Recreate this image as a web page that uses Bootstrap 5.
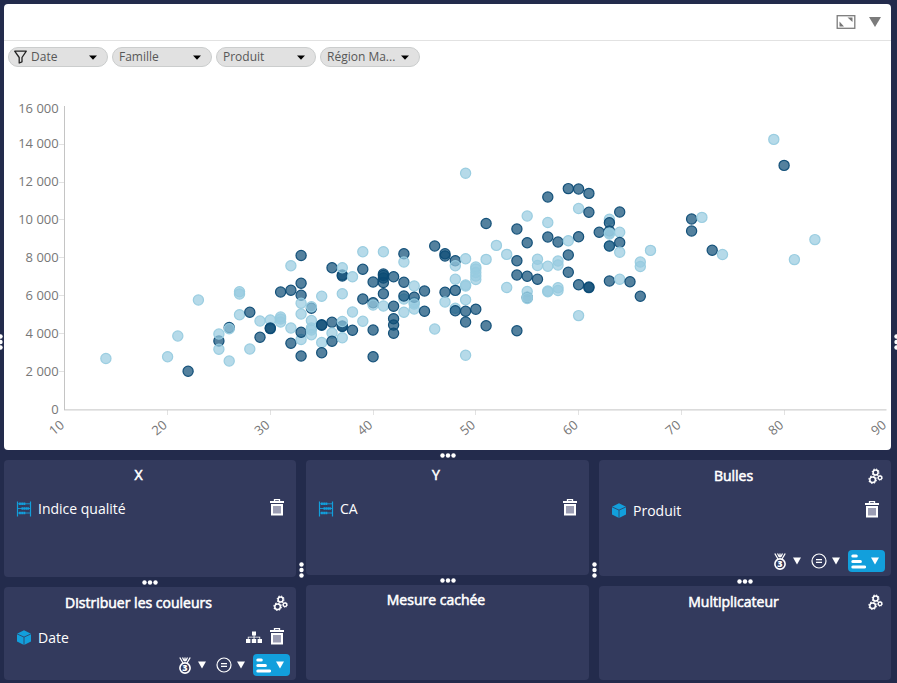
<!DOCTYPE html>
<html lang="fr">
<head>
<meta charset="utf-8">
<meta name="viewport" content="width=device-width, initial-scale=1">
<title>Nuage de points</title>
<link href="https://cdn.jsdelivr.net/npm/bootstrap@5.3.0/dist/css/bootstrap.min.css" rel="stylesheet">
<style>
body{background:#232b4c;font-family:"Open Sans","Noto Sans",sans-serif;font-size:14px;line-height:20px;color:#fff}
svg{display:block;flex:none}
.page{height:683px;padding:4px 6px 3px 4px}
.chart-panel{height:446px;border-radius:4px}
.chart-head{height:37px;border-bottom:1px solid #e2e2e2;padding-right:10px;gap:13px}
.filters{height:27px;padding:6px 4px 0;gap:4px}
.chip{width:100px;height:20px;border:1px solid #cbcdcd;border-radius:10px;background:#e1e1e1;color:#575757;font-size:12px;line-height:18px;padding:0 10px 0 6px}
.chip-icon{padding-left:5px}
.handle-x{height:10px}
.zones{height:220px}
.gutter{width:10px}
.zone-col{width:292px}
.zone-mid{width:283px}
.zone{background:#333a5d;border-radius:4px}
.h117{height:117px}.h116{height:116px}.h115{height:115px}
.zone-head{height:30px;padding:0 8.5px 0 .5px}
.zone-head.with-cog{height:32px}
.zone-title{-webkit-text-stroke:.55px #fff}
.cog{width:15px}
.item{height:38px;padding:0 12px;gap:6px;margin-bottom:-4px}
.with-cog + .item{height:37px}
.item-trash{margin-bottom:3px}
.item-tree{margin-right:2px}
.tools{padding:0 6px 4px 0}
.tool-medal{margin-right:7px}
.tool-equal{margin:0 5px 0 10px}
.tool-caret{margin-right:8px}
.sort-btn{width:37px;height:22px;border-radius:4px;background:#129fdc;padding:0 6px 0 3px}
.edge{top:334px}
.edge-l{left:-3px}.edge-r{right:-2px}
.axis-text{font-size:13px;fill:#777}
</style>
<script src="https://cdn.jsdelivr.net/npm/bootstrap@5.3.0/dist/js/bootstrap.bundle.min.js"></script>
</head>
<body class="overflow-hidden position-relative">
<svg width="0" height="0" class="position-absolute">
<defs>
<symbol id="dots-h" viewBox="0 0 16 6"><g fill="#fff"><circle cx="2.5" cy="3.5" r="2.2"/><circle cx="8" cy="3.5" r="2.2"/><circle cx="13.5" cy="3.5" r="2.2"/></g></symbol>
<symbol id="dots-v" viewBox="0 0 6 16"><g fill="#fff"><circle cx="3.5" cy="2.5" r="2.2"/><circle cx="3.5" cy="8" r="2.2"/><circle cx="3.5" cy="13.5" r="2.2"/></g></symbol>
<symbol id="trash" viewBox="0 0 14 17"><path d="M4.5 2V.7h5V2" fill="none" stroke="#fff" stroke-width="1.3"/><path d="M0 2h14v2H0z" fill="#fff"/><path d="M1 5h12v11.500H1z" fill="#fff"/><path d="M3 7h8v7.500H3z" fill="#9b9db3"/></symbol>
<symbol id="abacus" viewBox="0 0 16 16"><g stroke="#129fdc" fill="none"><path d="M1.5 .5v15M14.5 .5v15" stroke-width="1.2"/><path d="M1 2.8h14M1 7.500h14M1 12h14" stroke-width=".9"/><path d="M3 2.800h6.500M5.500 7.500h7.500M3 12h6.500" stroke-width="2.6" stroke-dasharray="1.9 .3"/></g></symbol>
<symbol id="cube" viewBox="0 0 16 16"><path d="M8 .2l7 3.500v7.800L8 15l-7-3.500V3.700z" fill="#129fdc"/><path d="M1 3.900l7 3.200 7-3.200M8 7.100V15" fill="none" stroke="#333a5d" stroke-width=".8"/></symbol>
<symbol id="cogs" viewBox="0 0 15 16"><g fill="none" stroke="#fff"><circle cx="7.6" cy="4.4" r="2.5" stroke-width="1.5"/><circle cx="7.6" cy="4.4" r="3.4" stroke-width="1.1" stroke-dasharray="1.3 1.37"/><circle cx="4.6" cy="11.7" r="2.8" stroke-width="1.5"/><circle cx="4.6" cy="11.7" r="3.700" stroke-width="1.2" stroke-dasharray="1.5 1.4"/><circle cx="12" cy="9.8" r="1.8" stroke-width="1.3"/><circle cx="12" cy="9.8" r="2.5" stroke-width=".8" stroke-dasharray="1 .96"/></g></symbol>
<symbol id="tree" viewBox="0 0 16 13"><g fill="#fff"><path d="M6 .5h4v4H6zM0 8h4.4v4H0zM5.8 8h4.4v4H5.8zM11.6 8H16v4h-4.4z"/><path d="M7.6 4h.9v4h-.9zM1.8 5.7h12.4v.9H1.8zM1.8 5.7h.8V8h-.8zM13.4 5.7h.8V8h-.8z"/></g></symbol>
<symbol id="medal" viewBox="0 0 12 17"><circle cx="6" cy="11" r="5.1" fill="none" stroke="#fff" stroke-width="1.6"/><path d="M.8.5L4 6M11.2.5L8 6M3.5.5L5.3 4M8.5.5L6.7 4M6 .5v4" stroke="#fff" stroke-width="1.3" fill="none"/><text x="6" y="14.2" font-size="9" font-weight="800" text-anchor="middle" fill="#fff">3</text></symbol>
<symbol id="equal" viewBox="0 0 16 16"><circle cx="8" cy="8" r="7" fill="none" stroke="#fff" stroke-width="1.2"/><path d="M5 6.6h6M5 9.400h6" stroke="#fff" stroke-width="1.1"/></symbol>
<symbol id="caret" viewBox="0 0 8 8"><path d="M0 .5h8L4 7.5z" fill="#fff"/></symbol>
<symbol id="bars" viewBox="0 0 15 15"><path d="M1.8 2h3.500M1.8 7.5h7.600M1.800 13h11.800" stroke="#fff" stroke-width="3" stroke-linecap="round"/></symbol>
<symbol id="chipcaret" viewBox="0 0 8 5"><path d="M0 .5h8L4 4.700z" fill="#000"/></symbol>
</defs>
</svg>
<main class="page d-flex flex-column">
  <section class="chart-panel bg-white">
    <div class="chart-head d-flex align-items-center justify-content-end">
      <svg width="20" height="16" viewBox="0 0 20 16"><rect x="1.2" y="1.7" width="17.6" height="12.6" fill="none" stroke="#7c7c7c" stroke-width="1.3"/><path d="M3.500 7.500v5H8zM11.500 3.500h5V8z" fill="#777"/></svg>
      <svg width="12" height="12" viewBox="0 0 12 12"><path d="M0 1h12L6 11z" fill="#7b7b7b"/></svg>
    </div>
    <div class="filters d-flex">
      <div class="chip chip-icon d-flex align-items-center"><svg width="13" height="14" viewBox="0 0 13 14"><path d="M.7 1.200h11.600L8 7.500v4.300L5.200 13V7.500z" fill="none" stroke="#222" stroke-width="1.3" stroke-linejoin="round"/></svg><span class="flex-grow-1 ps-1">Date</span><svg width="8" height="5"><use href="#chipcaret"/></svg></div>
      <div class="chip d-flex align-items-center"><span class="flex-grow-1">Famille</span><svg width="8" height="5"><use href="#chipcaret"/></svg></div>
      <div class="chip d-flex align-items-center"><span class="flex-grow-1">Produit</span><svg width="8" height="5"><use href="#chipcaret"/></svg></div>
      <div class="chip d-flex align-items-center"><span class="flex-grow-1 text-nowrap">Région Ma...</span><svg width="8" height="5"><use href="#chipcaret"/></svg></div>
    </div>
    <svg id="plot" width="887" height="382" viewBox="4 68 887 382"></svg>
  </section>

  <div class="handle-x d-flex align-items-center justify-content-center"><svg width="16" height="6"><use href="#dots-h"/></svg></div>

  <section class="zones d-flex">
    <div class="zone-col d-flex flex-column">
      <div class="zone h117 flex-shrink-0">
        <div class="zone-head d-flex align-items-center"><div class="zone-title flex-grow-1 text-center">X</div><div class="cog"></div></div>
        <div class="item d-flex align-items-center"><svg width="16" height="16"><use href="#abacus"/></svg><span class="flex-grow-1">Indice qualité</span><svg class="item-trash" width="14" height="17"><use href="#trash"/></svg></div>
      </div>
      <div class="handle-x flex-shrink-0 d-flex align-items-center justify-content-center"><svg width="16" height="6"><use href="#dots-h"/></svg></div>
      <div class="zone flex-grow-1 d-flex flex-column">
        <div class="zone-head with-cog flex-shrink-0 d-flex align-items-center"><div class="zone-title flex-grow-1 text-center">Distribuer les couleurs</div><svg width="15" height="16"><use href="#cogs"/></svg></div>
        <div class="item flex-shrink-0 d-flex align-items-center"><svg width="16" height="16"><use href="#cube"/></svg><span class="flex-grow-1">Date</span><svg class="item-tree" width="16" height="13"><use href="#tree"/></svg><svg class="item-trash" width="14" height="17"><use href="#trash"/></svg></div>
        <div class="tools d-flex justify-content-end align-items-center mt-auto">
          <svg class="tool-medal" width="12" height="17"><use href="#medal"/></svg><svg width="8" height="8"><use href="#caret"/></svg>
          <svg class="tool-equal" width="16" height="16"><use href="#equal"/></svg><svg class="tool-caret" width="8" height="8"><use href="#caret"/></svg>
          <div class="sort-btn d-flex align-items-center justify-content-between"><svg width="15" height="15"><use href="#bars"/></svg><svg width="8" height="8"><use href="#caret"/></svg></div>
        </div>
      </div>
    </div>
    <div class="gutter d-flex align-items-center justify-content-center"><svg width="6" height="16"><use href="#dots-v"/></svg></div>
    <div class="zone-mid d-flex flex-column">
      <div class="zone h115">
        <div class="zone-head d-flex align-items-center"><div class="zone-title flex-grow-1 text-center">Y</div><div class="cog"></div></div>
        <div class="item d-flex align-items-center"><svg width="16" height="16"><use href="#abacus"/></svg><span class="flex-grow-1">CA</span><svg class="item-trash" width="14" height="17"><use href="#trash"/></svg></div>
      </div>
      <div class="handle-x d-flex align-items-center justify-content-center"><svg width="16" height="6"><use href="#dots-h"/></svg></div>
      <div class="zone flex-grow-1">
        <div class="zone-head d-flex align-items-center"><div class="zone-title flex-grow-1 text-center">Mesure cachée</div><div class="cog"></div></div>
      </div>
    </div>
    <div class="gutter d-flex align-items-center justify-content-center"><svg width="6" height="16"><use href="#dots-v"/></svg></div>
    <div class="zone-col d-flex flex-column">
      <div class="zone h116 d-flex flex-column">
        <div class="zone-head with-cog d-flex align-items-center"><div class="zone-title flex-grow-1 text-center">Bulles</div><svg width="15" height="16"><use href="#cogs"/></svg></div>
        <div class="item d-flex align-items-center"><svg width="16" height="16"><use href="#cube"/></svg><span class="flex-grow-1">Produit</span><svg class="item-trash" width="14" height="17"><use href="#trash"/></svg></div>
        <div class="tools d-flex justify-content-end align-items-center mt-auto">
          <svg class="tool-medal" width="12" height="17"><use href="#medal"/></svg><svg width="8" height="8"><use href="#caret"/></svg>
          <svg class="tool-equal" width="16" height="16"><use href="#equal"/></svg><svg class="tool-caret" width="8" height="8"><use href="#caret"/></svg>
          <div class="sort-btn d-flex align-items-center justify-content-between"><svg width="15" height="15"><use href="#bars"/></svg><svg width="8" height="8"><use href="#caret"/></svg></div>
        </div>
      </div>
      <div class="handle-x d-flex align-items-center justify-content-center"><svg width="16" height="6"><use href="#dots-h"/></svg></div>
      <div class="zone flex-grow-1">
        <div class="zone-head with-cog d-flex align-items-center"><div class="zone-title flex-grow-1 text-center">Multiplicateur</div><svg width="15" height="16"><use href="#cogs"/></svg></div>
      </div>
    </div>
  </section>
</main>
<svg class="edge edge-l position-absolute" width="6" height="16"><use href="#dots-v"/></svg>
<svg class="edge edge-r position-absolute" width="6" height="16"><use href="#dots-v"/></svg>
<script>
// Each entry: x value followed by vertical positions, L = light series, D = dark series
const data = `14 L358.5
20 L356.7
21 L336
22 D371.3
23 L300
25 D341 L334 L349.3
26 D327.5 L328.8 L361
27 L291.7 L294 L314.7
28 D312.3 L349
29 L321 D337.3
30 L320 D328 D328.6
31 D292 L317 L319 L322
32 L265.7 D290.3 L328 D343.3
33 D255.5 D283.3 D295.3 L303.3 L314 L339.5 D332.3 D356
34 D308.2 L306.8 L320.5 L328 L330 L334.7
35 L296.3 D324.8 D325.2 L342.5 D352.7
36 D267.7 D322.3 L333 D341.3
37 D276 D275 L267.7 L293.7 D326.5 D326 L321.5 L337.7
38 L276.7 L312 D330.3
39 L251.7 D269.3 D299 L321.3
40 D282 D302.7 L305 D330 D356.7
41 L251.7 D282.5 D278 D275.5 D274 D293.7 L306
42 D276.7 D306.3 D318.7 D325 D333.3
43 D253.7 L262 D282.3 L299 D296 L312.3
44 L286 L302.5 D297.3 L304 L309
45 D291 D311.3
46 D246 L329
47 D253.7 D256 D292.3 L302
48 D260.7 L265.7 L279.3 D290.4 L308.3 D310.7
49 L173.2 L258.7 L285 L286 L299.7 D311.3 D322 L355.2
50 L267 L269 L272.5 L276 L279.5 D309.2
51 D223.5 L259.4 D325.7
52 L245.4
53 L254.4 L287.5
54 D229 D260.7 D275 D330.8
55 L216 D242.7 D276.3 L291.5 D297.5 L297 L298.5
56 L259.3 L265.5 D279.3
57 D197 L222.5 D237 L266.3 L291 L291.7
58 D242 L261 L265 L287.7 L290.5
59 D188.6 L240.7 D255 D272.2
60 D189 L208.5 D236.7 D284.7 L315.6
61 D193.4 D212.3 D287 D287.6
62 D232.3
63 L219.3 D222.7 D231 L233 L234 L246 D246 D281
64 D212 L232.3 D242.5 L252.2 L279.3
65 D281.7
66 L262 L266.5 D296.3
67 L250.4
71 D219 D231
72 L217.4
73 D250.3
74 L254.5
79 L139.4
80 D165.4
81 L259.6
83 L239.6`;
const X = v => 64.8 + (v - 10) * 10.276;
let out = '';
for (let v = 0; v <= 16000; v += 2000) {
  const y = 409.9 - v * .01899;
  const label = v ? (v / 1000) + ' 000' : '0';
  if (v && v < 16000) out += `<path d="M59 ${Math.floor(y)}.5h5" stroke="#e2e2e2"/>`;
  out += `<text class="axis-text" x="58.7" y="${(v === 16000 ? 108.5 : y) + 4.4}" text-anchor="end">${label}</text>`;
}
for (let v = 10; v <= 90; v += 10) {
  const x = X(v);
  if (v > 10 && v < 90) out += `<path d="M${Math.floor(x)}.5 410v5" stroke="#e2e2e2"/>`;
  out += `<text class="axis-text" text-anchor="end" transform="translate(${x + .3} 426.5) rotate(-40)">${v}</text>`;
}
out += '<path d="M64.5 106v304M64 409.9h822.5" fill="none" stroke="#c4c4c4"/>';
for (const line of data.split('\n')) {
  const [v, ...pts] = line.trim().split(' ');
  for (const p of pts) {
    const c = p[0] === 'D' ? '#0c4b75' : '#97cbdf';
    out += `<circle cx="${X(+v).toFixed(1)}" cy="${p.slice(1)}" r="5.1" fill="${c}" fill-opacity=".7" stroke="${c}" stroke-opacity=".95" stroke-width="1.2"/>`;
  }
}
document.getElementById('plot').innerHTML = out;
</script>
</body>
</html>
